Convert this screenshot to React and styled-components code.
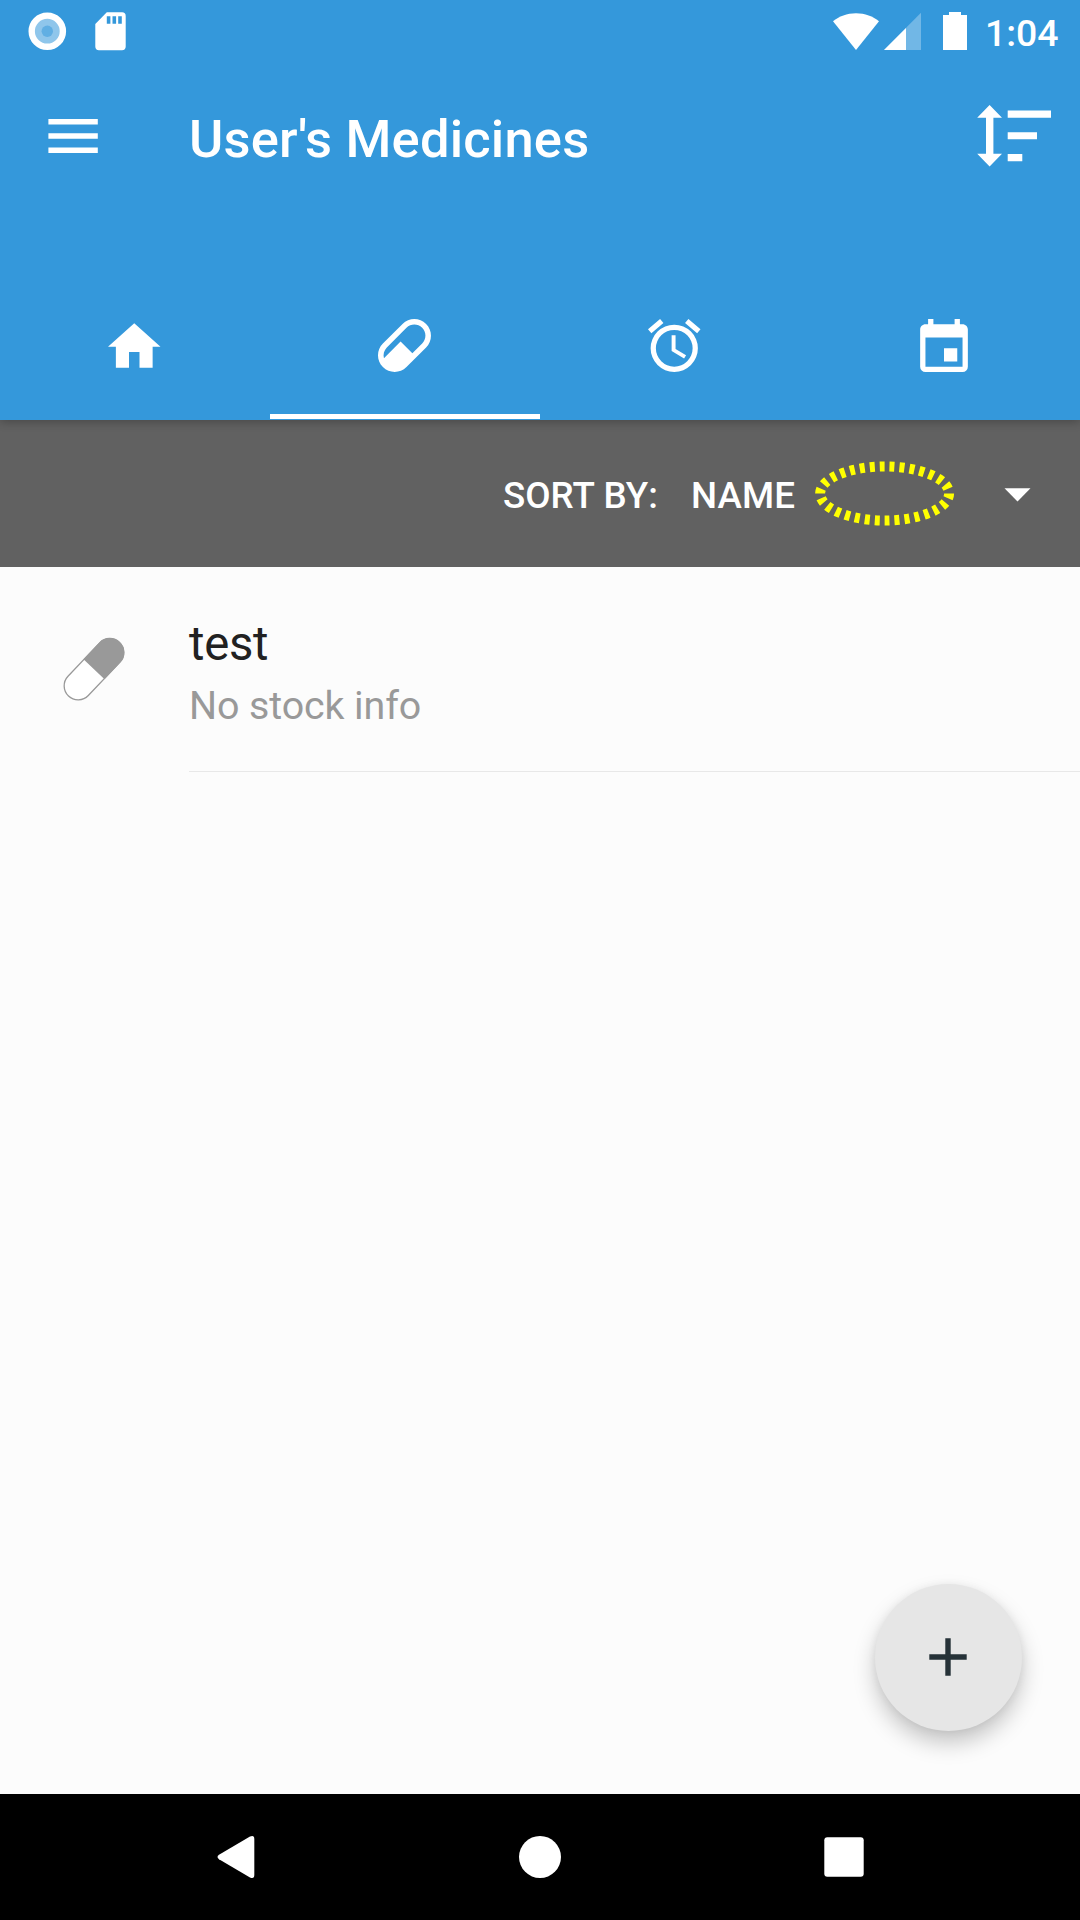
import React from "react";
import styled, { createGlobalStyle } from "styled-components";

const GlobalStyle = createGlobalStyle`
  * { box-sizing: border-box; }
  html, body { margin: 0; padding: 0; }
  body { font-family: Roboto, "Liberation Sans", sans-serif; background: #fcfcfc; }
`;

const Screen = styled.div`
  display: flex;
  flex-direction: column;
  width: 1080px;
  height: 1920px;
  background: #fcfcfc;
  overflow: hidden;
`;

const Header = styled.header`
  display: flex;
  flex-direction: column;
  height: 420px;
  flex: none;
  background: #3498db;
  color: #fff;
  box-shadow: 0 2px 9px rgba(0, 0, 0, 0.26);
  z-index: 1;
`;

const StatusBar = styled.div`
  display: flex;
  align-items: center;
  height: 62px;
  padding: 0 22px 0 28px;
`;

const Icon = styled.svg`
  display: block;
  flex: none;
  fill: currentColor;
  overflow: visible;
  margin-left: ${(p) => p.$gap || 0}px;
`;

const Spacer = styled.div`
  flex: 1;
`;

const Clock = styled.span`
  width: 73px;
  margin-left: 18px;
  font-size: 37.4px;
  font-weight: 500;
  line-height: 58px;
  padding-top: 3px;
  text-align: right;
  white-space: nowrap;
`;

const Toolbar = styled.div`
  display: flex;
  align-items: center;
  height: 148px;
  padding: 0 28px 0 48px;
`;

const Title = styled.h1`
  margin: 5px 0 0 91px;
  flex: 1;
  font-size: 52.5px;
  line-height: 62px;
  font-weight: 500;
  letter-spacing: 0.19px;
`;

const Tabs = styled.nav`
  display: grid;
  grid-template-columns: repeat(4, 270px);
  height: 210px;
`;

const Tab = styled.div`
  display: flex;
  align-items: center;
  justify-content: center;
  padding: 66px 2px 0 0;
  border-bottom: 5px solid ${(p) => (p.$active ? "#fff" : "transparent")};
  height: 209px;
`;

const SortBar = styled.div`
  display: flex;
  align-items: center;
  justify-content: flex-end;
  height: 147px;
  flex: none;
  padding: 0 49px 0 0;
  background: #616161;
  color: #fff;
`;

const SortText = styled.span`
  font-size: 36.75px;
  line-height: 44px;
  font-weight: 500;
  letter-spacing: 0.08px;
  padding-top: 5px;
  margin-right: ${(p) => p.$after}px;
`;

const Content = styled.main`
  flex: 1;
  display: flex;
  flex-direction: column;
`;

const Row = styled.div`
  display: flex;
  height: 205px;
  padding-left: 63px;
`;

const RowIcon = styled.div`
  width: 126px;
  padding-top: 70px;
`;

const RowText = styled.div`
  flex: 1;
  border-bottom: 1px solid #e8e8e8;
`;

const Name = styled.div`
  margin-top: 49px;
  font-size: 47.25px;
  line-height: 56px;
  letter-spacing: -0.3px;
  color: #212121;
`;

const Stock = styled.div`
  margin-top: 11px;
  font-size: 39.4px;
  line-height: 46px;
  letter-spacing: -0.1px;
  color: #999;
`;

const AddButton = styled.button`
  display: flex;
  align-items: center;
  justify-content: center;
  align-self: flex-end;
  width: 147px;
  height: 147px;
  margin: auto 58px 63px 0;
  padding: 0 2px 1px 0;
  border: 0;
  border-radius: 50%;
  background: #e6e6e6;
  color: #263238;
  box-shadow: 0 12px 22px rgba(0, 0, 0, 0.22), 0 1px 8px rgba(0, 0, 0, 0.06);
`;

const NavBar = styled.footer`
  display: flex;
  align-items: center;
  justify-content: space-between;
  height: 126px;
  flex: none;
  padding: 0 216px 0 217px;
  background: #000;
  color: #fff;
`;

const tabs = [
  {
    id: "home", box: "2 3 20 17", w: 52.5, h: 45,
    d: "M10,20V14H14V20H19V12H22L12,3L2,12H5V20H10Z",
  },
  {
    id: "medicines", box: "2.46 2.46 19.08 19.08", w: 53, h: 53,
    d: "M4.22,11.29L11.29,4.22C13.64,1.88 17.43,1.88 19.78,4.22C22.12,6.56 22.12,10.36 19.78,12.71L12.71,19.78C10.36,22.12 6.56,22.12 4.22,19.78C1.88,17.43 1.88,13.64 4.22,11.29M5.64,12.71C4.59,13.75 4.24,15.24 4.6,16.57L10.59,10.59L14.83,14.83L18.36,11.29C19.93,9.73 19.93,7.2 18.36,5.64C16.8,4.07 14.27,4.07 12.71,5.64L5.64,12.71Z",
  },
  {
    id: "alarms", box: "2 1.86 20 20.14", w: 52.5, h: 53,
    d: "M12,20A7,7 0 0,1 5,13A7,7 0 0,1 12,6A7,7 0 0,1 19,13A7,7 0 0,1 12,20M12,4A9,9 0 0,0 3,13A9,9 0 0,0 12,22A9,9 0 0,0 21,13A9,9 0 0,0 12,4M12.5,8H11V14L15.75,16.85L16.5,15.62L12.5,13.25V8M7.88,3.39L6.6,1.86L2,5.71L3.29,7.24L7.88,3.39M22,5.72L17.4,1.86L16.11,3.39L20.71,7.25L22,5.72Z",
  },
  {
    id: "calendar", box: "3 1 18 20", w: 48, h: 53,
    d: "M19,19H5V8H19M16,1V3H8V1H6V3H5C3.89,3 3,3.89 3,5V19A2,2 0 0,0 5,21H19A2,2 0 0,0 21,19V5C21,3.89 20.1,3 19,3H18V1M17,12H12V17H17V12Z",
  },
];

export default function App() {
  return (
    <>
      <GlobalStyle />
      <Screen>
        <Header>
          <StatusBar>
            <Icon width="38" height="38" viewBox="0 0 38 38">
              <circle cx="19.3" cy="19.2" r="15.5" fill="#fff" fillOpacity="0.45" />
              <circle cx="19.3" cy="19.2" r="5.7" fill="#3498db" fillOpacity="0.5" />
              <circle cx="19.3" cy="19.2" r="15.6" fill="none" stroke="#fff" strokeWidth="6.4" />
            </Icon>
            <Icon $gap={29} width="31" height="38" viewBox="0 0 31 38">
              <path fillRule="evenodd" d="M11.8 .3H27a3.7 3.7 0 0 1 3.7 3.7V34.6A3.7 3.7 0 0 1 27 38.3H4A3.7 3.7 0 0 1 .3 34.6V11.9ZM11.8 4.3v7.5h3.6V4.3ZM17.5 4.3v7.5h3.6V4.3ZM23.2 4.3v7.5h3.6V4.3Z" />
            </Icon>
            <Spacer />
            <Icon width="46" height="38" viewBox="0 0 46 38">
              <path d="M0 9.2C6 4.2 14 1.2 23 1.2S40 4.2 46 9.2L23 38Z" />
            </Icon>
            <Icon $gap={5} width="37" height="38" viewBox="0 0 37 38">
              <path d="M37 .8V38H0Z" fillOpacity="0.3" />
              <path d="M22 15.9V38H0Z" />
            </Icon>
            <Icon $gap={22} width="24" height="38" viewBox="0 0 24 38">
              <path d="M6 0H18V3H24V38H0V3H6Z" />
            </Icon>
            <Clock>1:04</Clock>
          </StatusBar>
          <Toolbar>
            <Icon width="50" height="34" viewBox="0 0 50 34">
              <path d="M.4 0H49.8V5.4H.4ZM.4 14.3H49.8V19.7H.4ZM.4 28.6H49.8V34H.4Z" />
            </Icon>
            <Title>User's Medicines</Title>
            <Icon width="75" height="62" viewBox="0 0 75 62">
              <path d="M12.6 0L25 12.7H16.4V48.7H25L12.6 61.5L.2 48.7H9V12.7H.2ZM30.7 5.5H74V12.7H30.7ZM30.7 27.3H60V34.3H30.7ZM30.7 48.9H45.3V56.2H30.7Z" />
            </Icon>
          </Toolbar>
          <Tabs>
            {tabs.map((t) => (
              <Tab key={t.id} $active={t.id === "medicines"}>
                <Icon width={t.w} height={t.h} viewBox={t.box}>
                  <path fillRule="evenodd" d={t.d} />
                </Icon>
              </Tab>
            ))}
          </Tabs>
        </Header>
        <SortBar>
          <SortText $after={33}>SORT BY:</SortText>
          <SortText $after={20}>NAME</SortText>
          <Icon width="140" height="64" viewBox="0 0 140 64">
            <ellipse
              cx="69.6" cy="31.5" rx="64.5" ry="27" fill="none" stroke="#ff0"
              strokeWidth="10" pathLength="300" strokeDasharray="5 5"
            />
          </Icon>
          <Icon $gap={50} width="26" height="14" viewBox="0 0 26 14">
            <path d="M-.5 1.3H25.5L12.5 14.5Z" />
          </Icon>
        </SortBar>
        <Content>
          <Row>
            <RowIcon>
              <Icon width="62" height="64" viewBox="0 0 62 64">
                <g transform="translate(31 32.2) rotate(43.5)">
                  <rect x="-14" y="-37" width="28" height="74" rx="14" fill="#fff" stroke="#999" strokeWidth="1.3" />
                  <path d="M-14.5 0V-23a14.5 14.5 0 0 1 29 0V0Z" fill="#999" />
                </g>
              </Icon>
            </RowIcon>
            <RowText>
              <Name>test</Name>
              <Stock>No stock info</Stock>
            </RowText>
          </Row>
          <AddButton aria-label="Add medicine">
            <Icon width="38" height="38" viewBox="0 0 38 38">
              <path d="M16.3 .3H21.7V16.3H37.7V21.7H21.7V37.7H16.3V21.7H.3V16.3H16.3Z" />
            </Icon>
          </AddButton>
        </Content>
        <NavBar>
          <Icon width="38" height="42" viewBox="0 0 38 42">
            <path d="M33 .6Q37.3-1.2 37.3 3V39Q37.3 43.2 33 41.4L2 23.2Q-1 21 2 18.8Z" />
          </Icon>
          <Icon width="42" height="42" viewBox="0 0 42 42">
            <circle cx="21" cy="21" r="21" />
          </Icon>
          <Icon width="40" height="40" viewBox="0 0 40 40">
            <rect x=".3" y=".3" width="39.4" height="39.4" rx="3" />
          </Icon>
        </NavBar>
      </Screen>
    </>
  );
}
